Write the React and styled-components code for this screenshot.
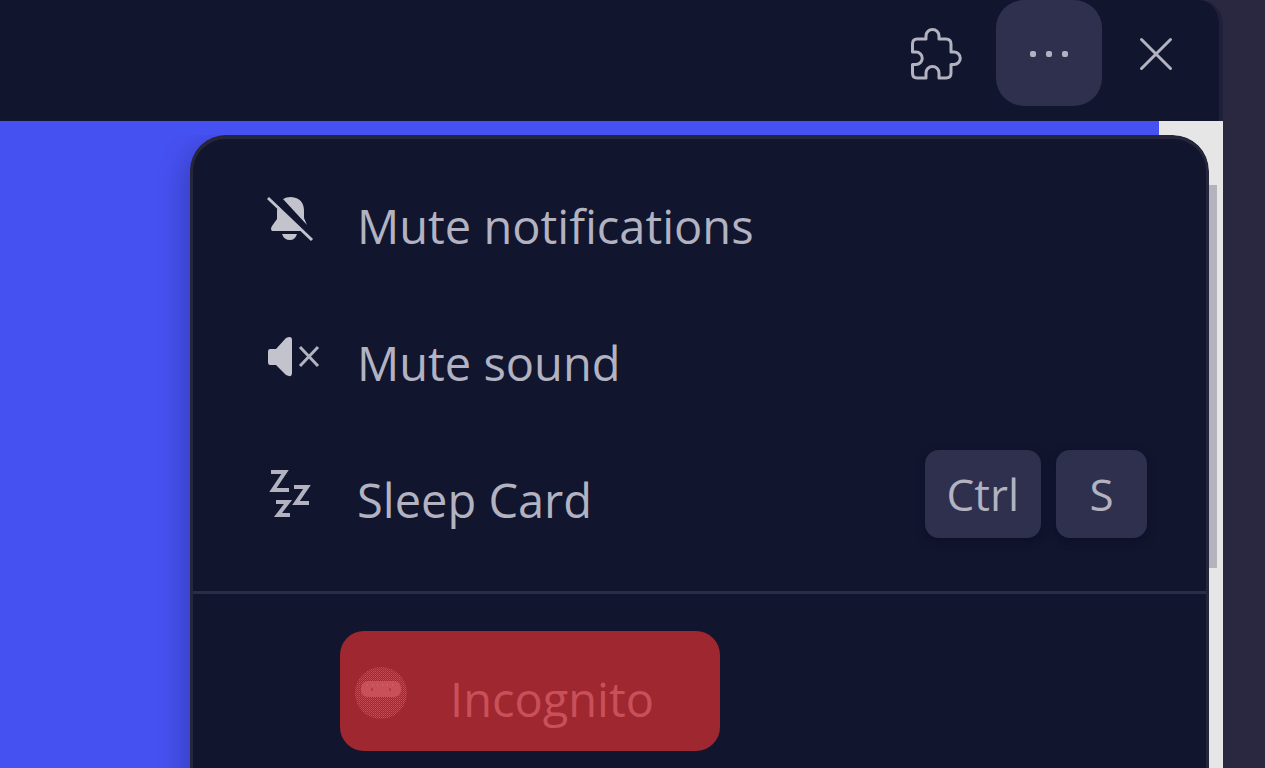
import React from 'react';
import styled, { createGlobalStyle } from 'styled-components';

const GlobalStyle = createGlobalStyle`
  *,
  *::before,
  *::after {
    box-sizing: border-box;
  }

  body {
    margin: 0;
    background-color: #2a2840;
    font-family: 'Open Sans', 'Noto Sans', sans-serif;
    overflow: hidden;
  }
`;

const Desktop = styled.div`
  height: 100vh;
  padding-right: 42px;
  overflow: hidden;
  background-color: #2a2840;
`;

const Card = styled.section`
  height: 100%;
  display: flex;
  flex-direction: column;
`;

const Toolbar = styled.header`
  display: flex;
  justify-content: flex-end;
  align-items: flex-start;
  flex: none;
  height: 121px;
  padding-right: 9px;
  background-color: #11152e;
  border-right: 4px solid #20203a;
  border-top-right-radius: 24px;
`;

const ToolButton = styled.button`
  display: flex;
  align-items: center;
  justify-content: center;
  width: ${(props) => props.$width || 106}px;
  height: 106px;
  padding: 2px 0 0;
  border: none;
  border-radius: 28px;
  background-color: ${(props) => (props.$active ? '#2e304e' : 'transparent')};
  color: #b2b2c0;
  cursor: pointer;
`;

const Content = styled.main`
  position: relative;
  flex: 1;
  min-height: 0;
  display: flex;
`;

const Page = styled.div`
  flex: 1;
  background-color: #4651f1;
`;

const ScrollTrack = styled.div`
  width: 64px;
  padding: 64px 6px 0;
  background-color: #e6e6e6;
`;

const ScrollThumb = styled.div`
  height: 383px;
  background-color: #b3b2bd;
`;

const Menu = styled.nav`
  position: absolute;
  top: 14px;
  right: 14px;
  bottom: -60px;
  left: 190px;
  padding-top: 12px;
  border: 4px solid #25253c;
  border-right-width: 3px;
  border-left-width: 3px;
  border-radius: 36px;
  background-color: #11152e;
  box-shadow: -8px 8px 28px -4px rgba(17, 21, 46, 0.3);
  clip-path: inset(0 0 0 -48px round 0 36px 0 0);
`;

const MenuItem = styled.button`
  display: flex;
  align-items: center;
  width: 100%;
  height: 137px;
  padding: 0 59px 0 74px;
  border: none;
  background: none;
  color: #b2b2c0;
  font-family: inherit;
  text-align: left;
  cursor: pointer;
`;

const ItemIcon = styled.span`
  display: flex;
  flex: none;
  width: 90px;
`;

const Label = styled.span`
  flex: 1;
  padding-top: 12px;
  font-size: 47px;
  line-height: 64px;
  white-space: nowrap;
`;

const Keys = styled.span`
  display: flex;
  gap: 15px;
`;

const Key = styled.kbd`
  display: flex;
  align-items: center;
  justify-content: center;
  min-width: 91px;
  height: 88px;
  padding: 0 22px;
  border-radius: 14px;
  background-color: #2e304e;
  box-shadow: 0 3px 8px rgba(8, 10, 32, 0.5);
  font-family: inherit;
  font-size: 44px;
  line-height: 64px;
`;

const Divider = styled.hr`
  height: 3px;
  margin: 29px 0 37px;
  border: none;
  background-color: #2b2c48;
`;

const IncognitoItem = styled(MenuItem)`
  width: 380px;
  height: 120px;
  margin-left: 147px;
  padding: 4px 15px 0;
  border-radius: 24px;
  background-color: #9e2730;
  color: #c95059;
  font-weight: 500;
`;

const IncognitoIconBox = styled(ItemIcon)`
  width: 95px;
`;

const PuzzleIcon = () => (
  <svg width="52" height="52" viewBox="0 0 52 52" fill="none" stroke="currentColor" strokeWidth="3" strokeLinejoin="round" aria-hidden="true">
    <path d="M7 11H16V8A6.3 6.3 0 0 1 29 8V11H36Q41 11 41 16V24H44A6.2 6.2 0 0 1 44 36.5H41V45Q41 50 36 50H29V45A6.3 6.3 0 0 0 16 45V50H7Q2.5 50 2.5 45V36.5H6A6.2 6.2 0 0 0 6 24H2.5V16Q2.5 11 7 11Z" />
  </svg>
);

const MoreIcon = () => (
  <svg width="40" height="8" viewBox="0 0 40 8" fill="currentColor" aria-hidden="true">
    <rect x="1" y="1" width="6" height="6" rx="2" />
    <rect x="17" y="1" width="6" height="6" rx="2" />
    <rect x="33" y="1" width="6" height="6" rx="2" />
  </svg>
);

const CloseIcon = () => (
  <svg width="34" height="34" viewBox="0 0 34 34" stroke="currentColor" strokeWidth="3" strokeLinecap="round" aria-hidden="true">
    <path d="M2.5 2.5L31.5 31.5M31.5 2.5L2.5 31.5" />
  </svg>
);

const BellOffIcon = () => (
  <svg width="54" height="48" viewBox="0 0 54 48" aria-hidden="true">
    <path fill="#c3c3ce" d="M16 3Q19 1 24 1Q37 2 37 15V22L40 29Z" />
    <path fill="#c3c3ce" d="M11 10L35 35H5Q3 33 5 30L10 23V15Q10 12 11 10Z" />
    <path fill="#c3c3ce" d="M15 38H30Q28 44 23 44Q17 44 15 38Z" />
    <path stroke="#c3c3ce" strokeWidth="3" d="M1 2L45 44" />
  </svg>
);

const SoundOffIcon = () => (
  <svg width="54" height="42" viewBox="0 0 54 42" aria-hidden="true">
    <path fill="#c3c3ce" d="M3 13H9L19 2Q25 -1 25 4V37Q25 42 19 39L9 29H3Q1 29 1 26V16Q1 13 3 13Z" />
    <path stroke="currentColor" strokeWidth="3" d="M33 11L51 30M51 11L33 30" />
  </svg>
);

const SleepIcon = () => (
  <svg width="54" height="50" viewBox="0 0 54 50" fill="none" stroke="currentColor" strokeWidth="4" aria-hidden="true">
    <path d="M4 3H18L6 21H22" />
    <path d="M27 18H40L29 34H42" />
    <path d="M9 33H21L11 46H23" />
  </svg>
);

const IncognitoIcon = () => (
  <svg width="52" height="52" viewBox="0 0 52 52" aria-hidden="true">
    <defs>
      <pattern id="grain" width="2" height="2" patternUnits="userSpaceOnUse">
        <rect width="1" height="1" fill="#c95059" />
        <rect x="1" y="1" width="1" height="1" fill="#b93f49" />
      </pattern>
    </defs>
    <circle cx="26" cy="26" r="26" fill="url(#grain)" />
    <rect x="6" y="14" width="40" height="16" rx="7" fill="#c95059" />
    <path stroke="#b88087" strokeWidth="1" strokeDasharray="1 4" d="M12 18H41" />
    <path stroke="#9e2730" strokeWidth="1" d="M17 21V24M35 21V24" />
  </svg>
);

const menuItems = [
  { label: 'Mute notifications', icon: <BellOffIcon /> },
  { label: 'Mute sound', icon: <SoundOffIcon /> },
  { label: 'Sleep Card', icon: <SleepIcon />, keys: ['Ctrl', 'S'] },
];

const App = () => {
  return (
    <>
      <GlobalStyle />
      <Desktop>
        <Card>
          <Toolbar>
            <ToolButton type="button" aria-label="Extensions" $width={120}>
              <PuzzleIcon />
            </ToolButton>
            <ToolButton type="button" aria-label="More options" aria-expanded="true" $active>
              <MoreIcon />
            </ToolButton>
            <ToolButton type="button" aria-label="Close" $width={108}>
              <CloseIcon />
            </ToolButton>
          </Toolbar>
          <Content>
            <Page />
            <ScrollTrack>
              <ScrollThumb />
            </ScrollTrack>
            <Menu>
              {menuItems.map((item) => (
                <MenuItem key={item.label} type="button">
                  <ItemIcon>{item.icon}</ItemIcon>
                  <Label>{item.label}</Label>
                  {item.keys && (
                    <Keys>
                      {item.keys.map((key) => (
                        <Key key={key}>{key}</Key>
                      ))}
                    </Keys>
                  )}
                </MenuItem>
              ))}
              <Divider />
              <IncognitoItem type="button">
                <IncognitoIconBox>
                  <IncognitoIcon />
                </IncognitoIconBox>
                <Label>Incognito</Label>
              </IncognitoItem>
            </Menu>
          </Content>
        </Card>
      </Desktop>
    </>
  );
};

export default App;
